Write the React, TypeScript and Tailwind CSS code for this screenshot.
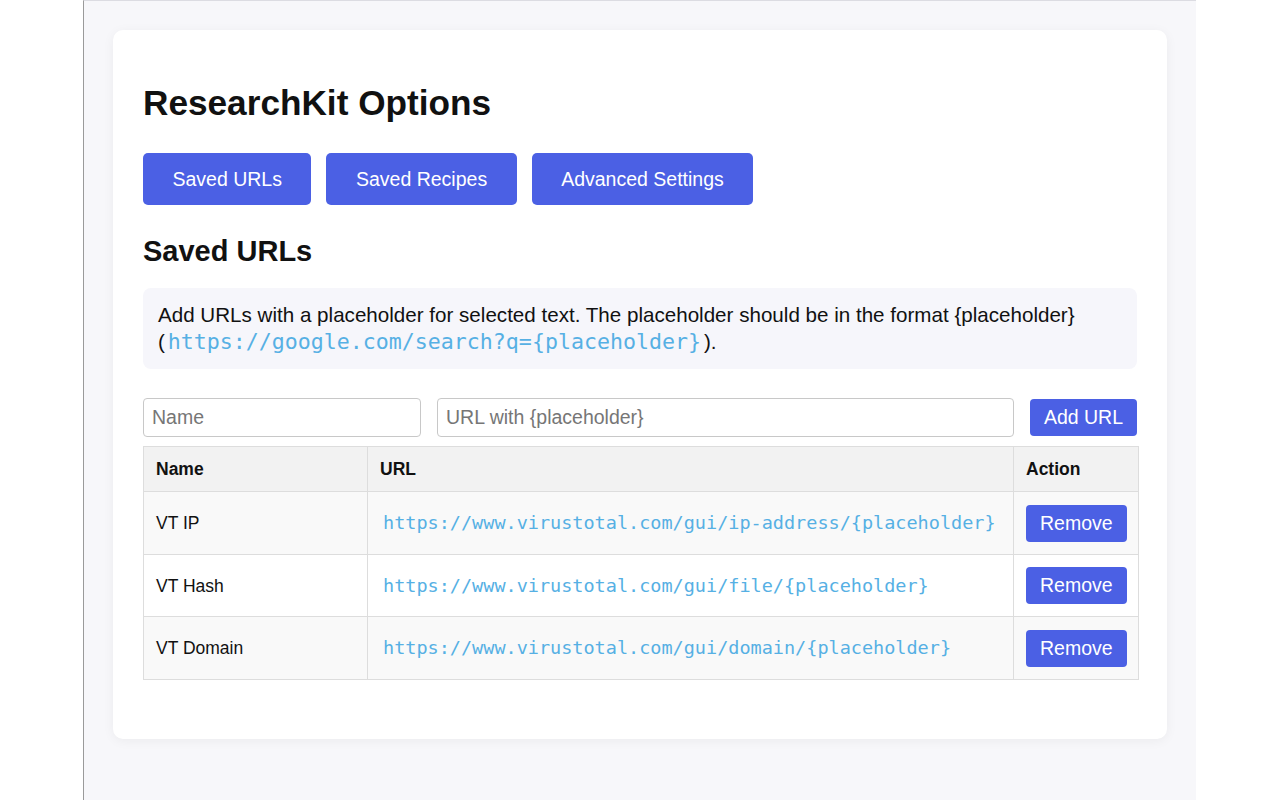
import React from "react";

const rows = [
  { name: "VT IP", url: "https://www.virustotal.com/gui/ip-address/{placeholder}" },
  { name: "VT Hash", url: "https://www.virustotal.com/gui/file/{placeholder}" },
  { name: "VT Domain", url: "https://www.virustotal.com/gui/domain/{placeholder}" },
];

const sans = "font-['Liberation_Sans',Arial,sans-serif]";
const mono = "font-['DejaVu_Sans_Mono',monospace]";

export default function App() {
  return (
    <div className={`flex h-[800px] w-full bg-white ${sans}`}>
      <div className="ml-[83px] h-full w-[1113px] border-l border-t border-l-[#9a9a9a] border-t-[#dcdce2] bg-[#f7f7fa] pl-[29px] pt-[29px]">
        {/* Options card */}
        <div className="w-[1054px] rounded-[10px] bg-white px-[30px] pb-[59px] pt-[30px] shadow-[0_2px_12px_rgba(0,0,0,0.05)]">
          <h1 className="mt-[23px] text-[35.2px] font-bold leading-[40px] text-[#111]">ResearchKit Options</h1>

          <div className="mt-[30px] flex gap-[15px]">
            {["Saved URLs", "Saved Recipes", "Advanced Settings"].map((t) => (
              <button
                key={t}
                className="rounded-[5px] bg-[#4b60e4] px-[29.5px] py-[15px] text-[19.5px] leading-[22px] text-white"
              >
                {t}
              </button>
            ))}
          </div>

          <h2 className="mt-[29px] text-[29px] font-bold leading-[34px] text-[#111]">Saved URLs</h2>

          <div className="mt-[20px] h-[81px] rounded-[8px] bg-[#f6f6fb] px-[15px] pt-[13px]">
            <p className="text-[20.6px] leading-[27px] text-[#111]">
              Add URLs with a placeholder for selected text. The placeholder should be in the format {"{placeholder}"}{" "}
              <span className="whitespace-nowrap">
                (
                <code className={`${mono} px-[3px] text-[21.6px] leading-[20px] text-[#56b0e4]`}>
                  https://google.com/search?q={"{placeholder}"}
                </code>
                ).
              </span>
            </p>
          </div>

          <div className="mt-[29px] flex items-center gap-[16px]">
            <input
              placeholder="Name"
              className="h-[39px] w-[278px] rounded-[4px] border border-[#c8c8c8] px-[8px] text-[19.5px] text-[#111] placeholder:text-[#767676] outline-none"
            />
            <input
              placeholder="URL with {placeholder}"
              className="h-[39px] w-[577px] rounded-[4px] border border-[#c8c8c8] px-[8px] text-[19.5px] text-[#111] placeholder:text-[#767676] outline-none"
            />
            <button className="h-[37px] rounded-[4px] bg-[#4b60e4] px-[14px] text-[19.5px] leading-[23px] text-white">
              Add URL
            </button>
          </div>

          <table className="mt-[9px] w-[995px] table-fixed border-collapse text-[17.5px] leading-[20px] text-[#111]">
            <colgroup>
              <col className="w-[224px]" />
              <col className="w-[646px]" />
              <col className="w-[125px]" />
            </colgroup>
            <thead>
              <tr className="bg-[#f2f2f2]">
                <th className="border border-[#dddddd] p-[12px] text-left font-bold">Name</th>
                <th className="border border-[#dddddd] p-[12px] text-left font-bold">URL</th>
                <th className="border border-[#dddddd] p-[12px] text-left font-bold">Action</th>
              </tr>
            </thead>
            <tbody>
              {rows.map((r, i) => (
                <tr key={r.name} className={i % 2 === 0 ? "bg-[#f9f9f9]" : "bg-white"}>
                  <td className="border border-[#dddddd] px-[12px] pb-[12px] pt-[12.6px]">{r.name}</td>
                  <td className="border border-[#dddddd] px-[12px] pb-[12px] pt-[12.6px]">
                    <code className={`${mono} px-[3px] text-[18.5px] text-[#56b0e4]`}>{r.url}</code>
                  </td>
                  <td className="border border-[#dddddd] px-[12px] pb-[12px] pt-[12.6px]">
                    <button className="h-[37px] rounded-[4px] bg-[#4b60e4] px-[14px] text-[19.5px] leading-[23px] text-white">
                      Remove
                    </button>
                  </td>
                </tr>
              ))}
            </tbody>
          </table>
        </div>
      </div>
    </div>
  );
}
